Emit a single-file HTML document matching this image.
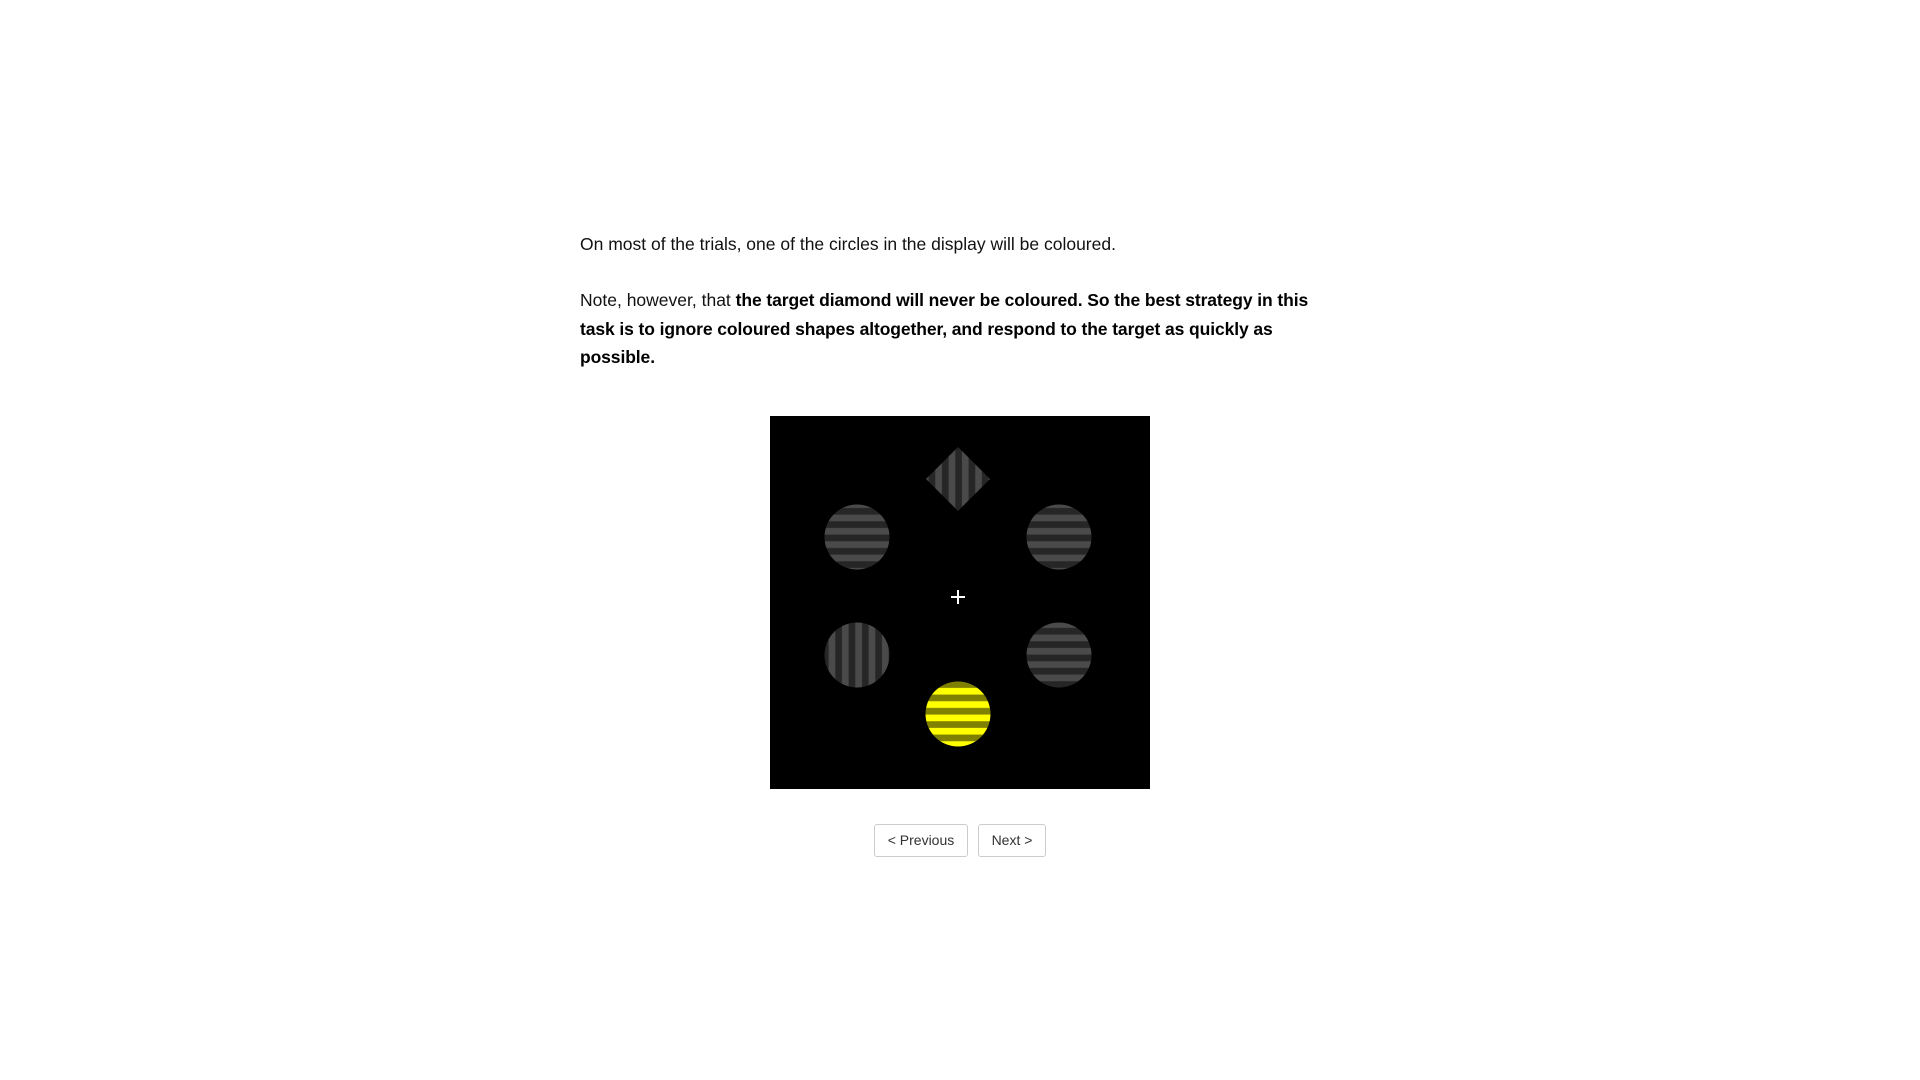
<!DOCTYPE html>
<html><head><meta charset="utf-8"><style>
html,body{margin:0;padding:0;background:#fff;width:1920px;height:1080px;overflow:hidden;font-family:"Liberation Sans",sans-serif;}
.t{position:absolute;left:580px;width:760px;font-size:17.5px;line-height:28.5px;color:#111;}
b{font-weight:bold;color:#000;letter-spacing:-0.1px}
.btn{position:absolute;top:824px;height:33px;box-sizing:border-box;border:1px solid #ccc;border-radius:3px;background:#fff;color:#333;font-size:14px;line-height:31px;text-align:center;}
</style></head><body>
<div class="t" style="top:230px">On most of the trials, one of the circles in the display will be coloured.</div>
<div class="t" style="top:286px">Note, however, that <b>the target diamond will never be coloured. So the best strategy in this task is to ignore coloured shapes altogether, and respond to the target as quickly as possible.</b></div>
<svg style="position:absolute;left:770px;top:416px" width="380" height="373" viewBox="0 0 380 373">
<defs>
<pattern id="h" width="13.33" height="13.33" patternUnits="userSpaceOnUse"><rect width="13.33" height="13.33" fill="#262626"/><rect y="5.3" width="13.33" height="6.67" fill="#4a4a4a"/></pattern>
<pattern id="v" width="13.33" height="13.33" patternUnits="userSpaceOnUse"><rect width="13.33" height="13.33" fill="#262626"/><rect x="5.3" width="6.67" height="13.33" fill="#4a4a4a"/></pattern>
<pattern id="y" width="13.33" height="13.33" patternUnits="userSpaceOnUse"><rect width="13.33" height="13.33" fill="#808000"/><rect y="5.3" width="13.33" height="6.67" fill="#ffff00"/></pattern>
</defs>
<rect width="380" height="373" fill="#000"/>
<polygon points="188,31 220,63 188,95 156,63" fill="url(#v)"/>
<circle cx="87" cy="121" r="32.5" fill="url(#h)"/>
<circle cx="289" cy="121" r="32.5" fill="url(#h)"/>
<circle cx="87" cy="239" r="32.5" fill="url(#v)"/>
<circle cx="289" cy="239" r="32.5" fill="url(#h)"/>
<circle cx="188" cy="298" r="32.5" fill="url(#y)"/>
<path d="M181 181h14M188 174v14" stroke="#fff" stroke-width="2"/>
</svg>
<div class="btn" style="left:874px;width:94px">&lt; Previous</div>
<div class="btn" style="left:978px;width:68px">Next &gt;</div>
</body></html>
